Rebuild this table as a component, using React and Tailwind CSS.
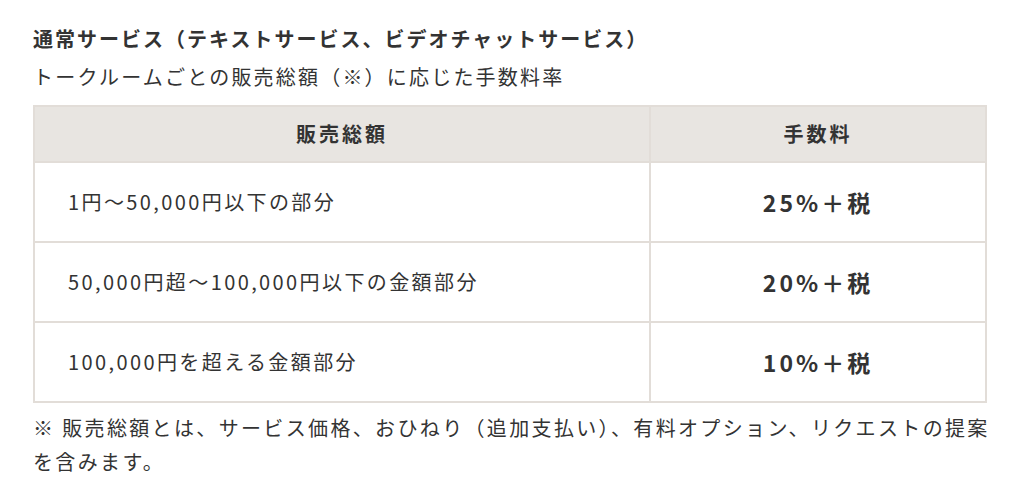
const rows = [
    { range: "1円〜50,000円以下の部分", rate: "25%＋税" },
    { range: "50,000円超〜100,000円以下の金額部分", rate: "20%＋税" },
    { range: "100,000円を超える金額部分", rate: "10%＋税" },
];

export default function App() {
    return (
        <div
            className="min-h-screen bg-white text-[#333] pl-[33px] pt-[24px]"
            style={{ fontFamily: "'Noto Sans CJK JP', 'Noto Sans', sans-serif" }}
        >
            {/* タイトル */}
            <h2 className="text-[20px] font-bold leading-[30px] tracking-[2px]">
                通常サービス（テキストサービス、ビデオチャットサービス）
            </h2>
            <p className="mt-[8px] text-[20px] leading-[30px] tracking-[2.2px]">
                トークルームごとの販売総額（※）に応じた手数料率
            </p>

            {/* 手数料テーブル */}
            <table className="mt-[13px] w-[954px] border-collapse border-2 border-[#e2ddd8]">
                <thead>
                    <tr className="bg-[#e8e5e1] h-[56px]">
                        <th className="w-[616px] border-2 border-[#e2ddd8] text-[20px] font-bold tracking-[3px] text-center">
                            販売総額
                        </th>
                        <th className="border-2 border-[#e2ddd8] text-[20px] font-bold tracking-[3px] text-center">
                            手数料
                        </th>
                    </tr>
                </thead>
                <tbody>
                    {rows.map((row) => (
                        <tr key={row.rate} className="h-[80px]">
                            <td className="border-2 border-[#e2ddd8] pl-[33px] text-[20px] tracking-[2.4px]">
                                {row.range}
                            </td>
                            <td className="border-2 border-[#e2ddd8] text-center text-[23px] font-bold tracking-[3px]">
                                {row.rate}
                            </td>
                        </tr>
                    ))}
                </tbody>
            </table>

            {/* 注釈 */}
            <p className="mt-[8px] w-[972px] text-[20px] leading-[34px] tracking-[2.35px]">
                ※ 販売総額とは、サービス価格、おひねり（追加支払い）、有料オプション、リクエストの提案を含みます。
            </p>
        </div>
    );
}
